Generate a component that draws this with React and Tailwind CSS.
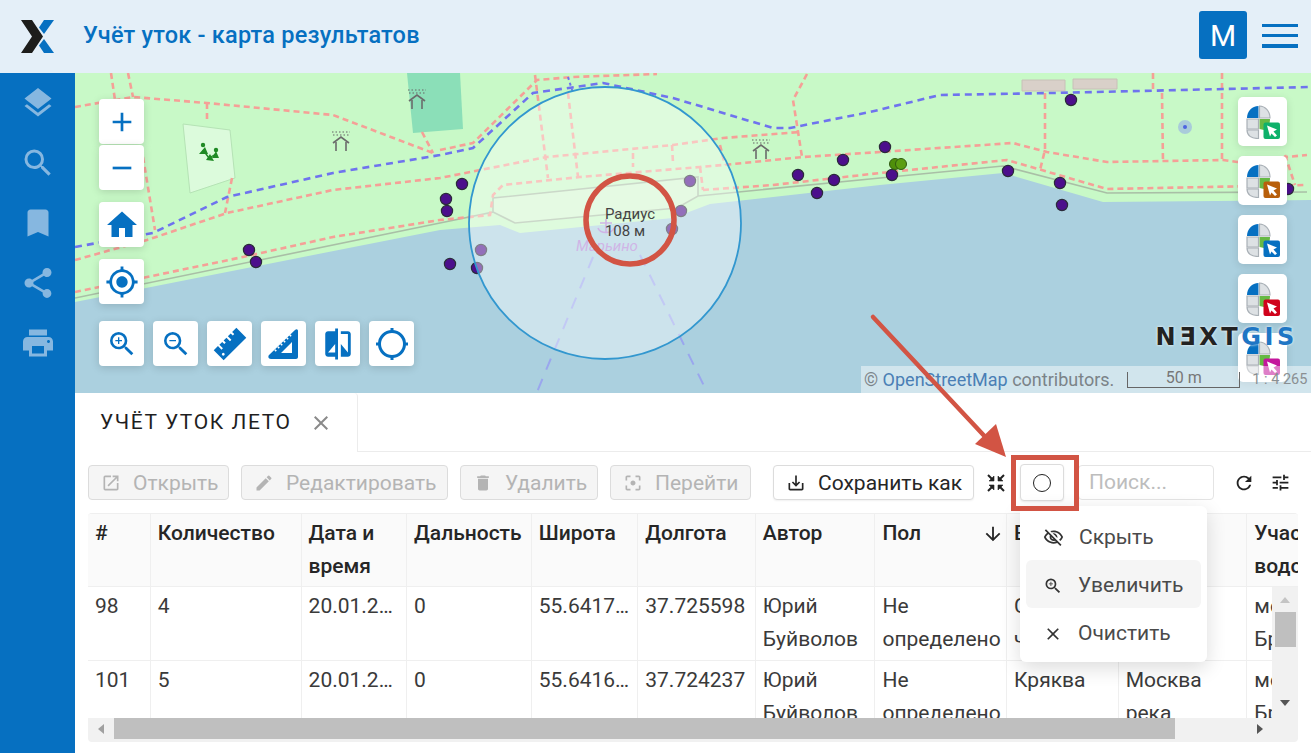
import {
  MdAdd, MdRemove, MdHome, MdGpsFixed, MdZoomIn, MdZoomOut, MdCompare,
  MdLayers, MdSearch, MdBookmark, MdShare, MdPrint, MdClose, MdOpenInNew, MdEdit, MdDelete,
  MdFilterCenterFocus, MdSaveAlt, MdRefresh, MdTune, MdOutlineVisibilityOff,
  MdArrowDownward,
} from "react-icons/md";

const FONT = "font-['Roboto','Liberation_Sans',sans-serif]";

// page coords, the map svg uses viewBox 75 73 1236 320
const RED_ROADS = [
  "M75 107L133 97L207 103L333 115L433 153",
  "M440 150L473 143L537 80L573 77L657 74",
  "M75 260L147 240L227 213L333 190L440 178L480 170L547 157L673 145L723 138L800 132",
  "M75 292L243 257L333 237L440 220L490 215L493 195L503 185L580 177L700 167L723 165L803 157L880 152L1013 143L1047 152L1107 162L1223 160L1237 162L1307 155",
  "M703 190L773 185L880 173L1007 160L1107 189L1307 185",
  "M700 167L703 190",
  "M1045 93L1045 150L1040 170",
  "M1162 93L1163 163",
  "M1222 73L1222 160",
  "M1153 73L1153 90",
  "M535 75L548 178",
  "M568 93L578 177",
  "M633 153L633 167",
  "M672 145L673 163",
  "M807 74L793 100L802 157",
  "M720 145L725 165",
  "M111 73L115 100",
  "M128 73L133 97",
  "M207 103L207 123",
  "M232 178L225 213",
  "M143 157L155 230",
  "M422 132L433 153",
  "M1285 155L1295 185",
];
const BLUE_PATH =
  "M75 247L153 233L227 197L333 173L440 155L473 148L533 93L603 83L673 98L773 128L790 128L870 112L940 95L1053 93L1310 87";
const POINTS = [
  [249, 250], [256, 262], [462, 184], [446, 199], [447, 211], [450, 264], [477, 268], [481, 250],
  [690, 181], [681, 211], [672, 229], [798, 175], [843, 160], [834, 180], [817, 193], [1071, 100],
  [885, 147], [892, 175], [1008, 171], [1060, 183], [1062, 205], [1288, 189],
];

function Shelter({ x, y }) {
  return (
    <g transform={`translate(${x} ${y})`} fill="none" stroke="#6b6b6b">
      <path d="M-8 2L0 -4L8 2" strokeWidth="1.6" />
      <path d="M-5 1V10M5 1V10" strokeWidth="1.6" />
      <path d="M-9 -9H9M-8 -6H8" strokeWidth="1.4" strokeDasharray="1.5 2" opacity="0.7" />
    </g>
  );
}

function MapBase() {
  return (
    <svg className="absolute inset-0 h-full w-full" viewBox="75 73 1236 320">
      <rect x="75" y="73" width="1236" height="320" fill="#c8f9c7" />
      <path d="M407 73L460 73L463 129L413 133Z" fill="#8bdfb8" />
      <path d="M183 124L230 130L235 178L190 193Z" fill="#dcfbdc" stroke="#b5e3b5" />
      <path d="M1022 80H1065V91H1022ZM1073 79H1117V89H1073Z" fill="#d9d0c9" stroke="#c8c0b8" />
      <path
        d="M75 302L440 230L500 225L520 233L673 218L710 204L880 185L1003 173L1103 202L1311 200V393H75Z"
        fill="#abd0df"
      />
      <path d="M493 198L698 177V196L677 208L515 223L493 212Z" fill="#d4f7d0" />
      <path
        d="M75 298L440 223L493 212V198L698 177V196M493 212L515 223L677 208L698 196L880 178L1003 166L1107 193L1307 192"
        fill="none"
        stroke="#a9bfa6"
        strokeWidth="1.6"
      />
      <path
        d="M593 257L537 392M640 255L707 392"
        fill="none"
        stroke="#9aa6ee"
        strokeWidth="2"
        strokeDasharray="12 10"
      />
      {RED_ROADS.map((d) => (
        <path key={d} d={d} fill="none" stroke="#f5a097" strokeWidth="2.6" strokeDasharray="6 4" />
      ))}
      <path d={BLUE_PATH} fill="none" stroke="#6f73ee" strokeWidth="2.6" strokeDasharray="7 5" />
      <path d="M568 77L573 93" stroke="#6f73ee" strokeWidth="2" strokeDasharray="3 3" />

      <g fill="#1f8a24">
        <circle cx="203" cy="145" r="2.2" />
        <circle cx="216" cy="150" r="2.2" />
        <path d="M199 154L205 147L208 154ZM206 160L210 154L214 161ZM212 158L216 151L219 158Z" />
        <path d="M203 150L209 158L216 154" stroke="#1f8a24" strokeWidth="1.4" fill="none" />
      </g>
      <Shelter x={341} y={141} />
      <Shelter x={417} y={99} />
      <Shelter x={761} y={149} />

      <circle cx="1185" cy="127" r="7" fill="#8fa6ea" opacity="0.55" />
      <circle cx="1185" cy="127" r="2" fill="#4d64e0" />

      <path
        d="M606 219V233M600 223H612M598 228C600 234 612 234 614 228"
        fill="none"
        stroke="#b083d6"
        strokeWidth="1.6"
      />
      <text x="607" y="251" textAnchor="middle" fontSize="15" fontStyle="italic" fill="#b083d6" fontFamily="Roboto">
        Марьино
      </text>

      {POINTS.map(([cx, cy]) => (
        <circle key={`${cx}-${cy}`} cx={cx} cy={cy} r="5.6" fill="#4c0f8c" stroke="#2b2b3a" strokeWidth="1.2" />
      ))}
      <circle cx="895" cy="164" r="5.5" fill="#4f8f0a" stroke="#2f5a10" />
      <circle cx="901" cy="164" r="5.5" fill="#5b9e10" stroke="#2f5a10" />

      <circle cx="605" cy="223" r="136" fill="#ffffff" fillOpacity="0.4" stroke="#3297cf" strokeWidth="1.8" />
      <text x="630" y="219" textAnchor="middle" fontSize="15" fill="#444" fontFamily="Roboto">
        Радиус
      </text>
      <text x="625" y="236" textAnchor="middle" fontSize="15" fill="#444" fontFamily="Roboto">
        108 м
      </text>
    </svg>
  );
}

function MapBtn({ children, className = "" }) {
  return (
    <div
      className={`flex h-[45px] w-[45px] items-center justify-center rounded-[4px] bg-white text-[#0670c1] shadow-[0_2px_8px_rgba(0,0,0,0.15)] ${className}`}
    >
      {children}
    </div>
  );
}

function RulerIcon() {
  return (
    <svg width="36" height="36" viewBox="0 0 36 36">
      <g transform="rotate(-45 18 18)">
        <path fill="#0670c1" d="M2 11H8V16H10V11H14V14H16V11H20V16H22V11H26V14H28V11H34V25H2Z" />
        <circle cx="6" cy="20.5" r="1.4" fill="#fff" />
      </g>
    </svg>
  );
}

function SetSquareIcon() {
  return (
    <svg width="34" height="34" viewBox="0 0 34 34">
      <path
        fillRule="evenodd"
        fill="#0670c1"
        d="M2 28L28 3C30 1.5 31 3 31 4V30C31 31 30 32 29 32H4C1 32 1 29 2 28ZM14 26H25V15Z"
      />
      <path d="M8 24L24 8" stroke="#fff" strokeWidth="2" strokeDasharray="1.6 2.6" fill="none" />
    </svg>
  );
}

function TargetIcon() {
  return (
    <svg width="36" height="36" viewBox="0 0 36 36" fill="none" stroke="#0670c1" strokeWidth="3">
      <circle cx="18" cy="18" r="12.5" />
      <path d="M18 2V7M18 29V34M2 18H7M29 18H34" />
    </svg>
  );
}

function CompressIcon() {
  return (
    <svg width="18" height="18" viewBox="0 0 18 18" className="ml-[13px] shrink-0" fill="#222" stroke="#222">
      <path d="M1 1L5 5M17 1L13 5M1 17L5 13M17 17L13 13" strokeWidth="2" fill="none" />
      <path d="M7 2V7H2ZM11 2V7H16ZM7 16V11H2ZM11 16V11H16Z" strokeWidth="0.6" />
    </svg>
  );
}

function PickIcon({ color }) {
  return (
    <svg width="34" height="34" viewBox="0 0 34 34">
      <path d="M1 13C1 6 6 1 12.5 1V13Z" fill="#0670c1" />
      <path d="M13.5 1C19 1 24 6 24 13H13.5Z" fill="#dde1e4" stroke="#a9b0b6" strokeWidth="1.2" />
      <path d="M1 14H12.5V24H1Z" fill="#dde1e4" stroke="#a9b0b6" strokeWidth="1.2" />
      <path d="M13.5 14H24C24 19 22 23 18 25L13.5 24Z" fill="#66b944" />
      <path d="M1 25H12.5V33.5C6 33.5 1 31 1 25Z" fill="#dde1e4" stroke="#a9b0b6" strokeWidth="1.2" />
      <rect x="17.5" y="17.5" width="16.5" height="16.5" rx="2" fill={color} />
      <path d="M21 20.5L31 24.5L27.5 26.5L31 30.5L29 32L25.5 28.5L24 31.5Z" fill="#fff" />
    </svg>
  );
}

function MapControls() {
  return (
    <>
      <div className="absolute left-[24px] top-[26px] flex flex-col">
        <MapBtn><MdAdd size={32} /></MapBtn>
        <MapBtn className="mt-px"><MdRemove size={32} /></MapBtn>
        <MapBtn className="mt-3"><MdHome size={36} /></MapBtn>
        <MapBtn className="mt-3"><MdGpsFixed size={34} /></MapBtn>
        <div className="mt-[17px] flex gap-[9px]">
          <MapBtn><MdZoomIn size={32} /></MapBtn>
          <MapBtn><MdZoomOut size={32} /></MapBtn>
          <MapBtn><RulerIcon /></MapBtn>
          <MapBtn><SetSquareIcon /></MapBtn>
          <MapBtn><MdCompare size={34} /></MapBtn>
          <MapBtn><TargetIcon /></MapBtn>
        </div>
      </div>

      <div className="absolute right-[24px] top-[24px] flex flex-col gap-[10px]">
        {["#0eb16b", "#b85f0b", "#0670c1", "#d0021b", "#c4169c"].map((c) => (
          <div
            key={c}
            className="flex h-[49px] w-[49px] items-center justify-center rounded-[5px] bg-white shadow-[0_2px_8px_rgba(0,0,0,0.12)]"
          >
            <PickIcon color={c} />
          </div>
        ))}
      </div>

      <div className={`absolute bottom-0 right-0 flex h-[27px] w-[450px] items-center bg-white/45 pl-[3px] text-[18px] text-[#7b8388] ${FONT}`}>
        <span className="whitespace-nowrap">
          © <span className="text-[#4a7fb5]">OpenStreetMap</span> contributors.
        </span>
        <span className="ml-[13px] flex h-[16px] w-[113px] shrink-0 items-center justify-center border-x border-b border-[#666] pb-[2px] text-[16px] leading-none text-[#777]">
          50 m
        </span>
        <span className="ml-[12px] whitespace-nowrap text-[14.5px] text-[#8a8f92]">1 : 4 265</span>
      </div>

      <div className="absolute right-[13px] top-[249px] flex text-[24px] font-bold leading-[30px] tracking-[3.6px] [text-shadow:0_0_3px_#fff] font-['DejaVu_Sans',sans-serif]">
        <span className="text-[#222222]">NƎXT</span>
        <span className="text-[#1f76c4]">GIS</span>
      </div>
    </>
  );
}

function ToolBtn({ icon, label, width, disabled = true }) {
  return (
    <button
      className={`flex h-[35px] items-center gap-[12px] rounded-[4px] border pl-[12px] text-[21px] ${width} ${
        disabled
          ? "border-[#dcdcdc] bg-[#f5f5f5] text-[#b4b4b4]"
          : "border-[#dcdcdc] bg-white text-[#262626] shadow-[0_1px_2px_rgba(0,0,0,0.06)]"
      }`}
    >
      {icon}
      <span className="whitespace-nowrap pt-[2px]">{label}</span>
    </button>
  );
}

const COLS = [62, 150, 105, 124, 106, 117, 119, 131, 111, 128, 120];
const HEAD = ["#", "Количество", "Дата и время", "Дальность", "Широта", "Долгота", "Автор", "Пол", "Вид", "Водоём", "Участок водоёма"];
const ROWS = [
  ["98", "4", "20.01.2024", "0", "55.641712", "37.725598", "Юрий Буйволов", "Не определено", "Серая чернеть", "Москва река", "москва Братеево"],
  ["101", "5", "20.01.2024", "0", "55.641654", "37.724237", "Юрий Буйволов", "Не определено", "Кряква", "Москва река", "москва Братеево"],
];

function DataTable() {
  return (
    <div className="relative mx-[13px] mt-[13px] h-[229px] w-[1210px] overflow-hidden rounded-[4px] border-t border-[#efefef] bg-[#f1f1f1]">
      <div className="h-[204px] overflow-hidden bg-white">
        <table className="w-[1280px] table-fixed border-collapse text-[21px] leading-[33px]">
          <colgroup>
            {COLS.map((w, i) => (
              <col key={i} style={{ width: w }} />
            ))}
          </colgroup>
          <thead>
            <tr className="h-[72px] bg-[#fafafa] text-left align-top font-medium text-[#262626]">
              {HEAD.map((h, i) => (
                <th key={h} className="border-b border-r border-[#efefef] px-[7px] pt-[3px] font-medium">
                  {i === 7 ? (
                    <span className="flex items-center justify-between">
                      {h}
                      <MdArrowDownward size={22} className="-mr-[5px]" />
                    </span>
                  ) : (
                    h
                  )}
                </th>
              ))}
            </tr>
          </thead>
          <tbody>
            {ROWS.map((row, r) => (
              <tr key={row[0]} className={`align-top text-[#3a3a3a] ${r === 0 ? "h-[74px]" : "h-[73px]"}`}>
                {row.map((v, i) => (
                  <td
                    key={i}
                    className={`border-b border-r border-[#efefef] px-[7px] pt-[3px] ${
                      i === 2 || i === 4 ? "overflow-hidden text-ellipsis whitespace-nowrap" : ""
                    }`}
                  >
                    {v}
                  </td>
                ))}
              </tr>
            ))}
          </tbody>
        </table>
      </div>

      {/* vertical scrollbar */}
      <div className="absolute right-0 top-[73px] flex h-[131px] w-[26px] flex-col items-center bg-[#f1f1f1]">
        <div className="mt-[10px] h-0 w-0 border-x-[5px] border-b-[6px] border-x-transparent border-b-[#c4c4c4]" />
        <div className="mt-[9px] h-[35px] w-[21px] bg-[#bfbfbf]" />
        <div className="mt-[53px] h-0 w-0 border-x-[5px] border-t-[6px] border-x-transparent border-t-[#555]" />
      </div>
      {/* horizontal scrollbar */}
      <div className="absolute bottom-[3px] left-0 flex h-[21px] w-[1184px] items-center">
        <div className="ml-[10px] h-0 w-0 border-y-[5px] border-r-[6px] border-y-transparent border-r-[#a0a0a0]" />
        <div className="ml-[10px] h-[21px] w-[1061px] bg-[#bfbfbf]" />
        <div className="ml-[82px] h-0 w-0 border-y-[5px] border-l-[6px] border-y-transparent border-l-[#555]" />
      </div>
    </div>
  );
}

function Dropdown() {
  const items = [
    { icon: <MdOutlineVisibilityOff size={21} />, label: "Скрыть" },
    { icon: <MdZoomIn size={20} />, label: "Увеличить", active: true },
    { icon: <MdClose size={20} />, label: "Очистить" },
  ];
  return (
    <div className="absolute left-[945px] top-[113px] w-[187px] rounded-[6px] bg-white p-[6px] shadow-[0_6px_20px_rgba(0,0,0,0.14)]">
      {items.map((it) => (
        <div
          key={it.label}
          className={`flex h-[48px] items-center gap-[15px] rounded-[6px] pl-[17px] pt-[3px] text-[21px] text-[#4a4a4a] ${
            it.active ? "bg-[#f5f5f5]" : ""
          }`}
        >
          <span className="text-[#333]">{it.icon}</span>
          {it.label}
        </div>
      ))}
    </div>
  );
}

function Panel() {
  return (
    <div className={`relative flex-1 bg-white ${FONT}`}>
      <div className="flex h-[59px]">
        <div className="flex w-[283px] items-center rounded-tr-[4px] border-r border-[#ececec] pl-[25px] pt-[1px]">
          <span className="text-[21px] tracking-[1.57px] text-[#1f1f1f]">УЧЁТ УТОК ЛЕТО</span>
          <MdClose size={24} className="ml-[17px] text-[#8a8a8a]" />
        </div>
        <div className="flex-1 border-b border-[#ececec]" />
      </div>

      <div className="mt-[13px] flex h-[35px] items-center pl-[13px]">
        <div className="flex gap-3">
          <ToolBtn width="w-[141px]" label="Открыть" icon={<MdOpenInNew size={20} />} />
          <ToolBtn width="w-[207px]" label="Редактировать" icon={<MdEdit size={20} />} />
          <ToolBtn width="w-[138px]" label="Удалить" icon={<MdDelete size={20} />} />
          <ToolBtn width="w-[141px]" label="Перейти" icon={<MdFilterCenterFocus size={20} />} />
        </div>
        <div className="ml-[22px]">
          <ToolBtn width="w-[201px]" label="Сохранить как" disabled={false} icon={<MdSaveAlt size={20} />} />
        </div>
        <CompressIcon />
        <div className="relative ml-[15px] flex h-[37px] w-[44px] items-center justify-center rounded-[4px] border border-[#dcdcdc] bg-white shadow-[0_1px_2px_rgba(0,0,0,0.08)]">
          <span className="h-[18px] w-[18px] rounded-full border-[1.5px] border-[#222]" />
          <span className="absolute -left-[10px] -top-[10px] z-10 h-[56px] w-[68px] border-[5px] border-[#d25444]" />
        </div>
        <div className="ml-[14px] flex h-[35px] w-[136px] items-center rounded-[4px] border border-[#e4e4e4] pl-[10px] text-[21px] text-[#bdbdbd]">
          Поиск...
        </div>
        <MdRefresh size={22} className="ml-[19px] text-[#222]" />
        <MdTune size={21} className="ml-[15px] text-[#222]" />
      </div>

      <DataTable />
      <Dropdown />
    </div>
  );
}

export default function App() {
  return (
    <div className={`relative flex h-screen flex-col overflow-hidden bg-white ${FONT}`}>
      <header className="flex h-[73px] shrink-0 items-center bg-[#e4eff8]">
        <svg className="ml-[21px] shrink-0" width="33" height="33" viewBox="21 19 33 33">
          <path d="M21 19H32L43 35.5L32 52H21L32 35.5Z" fill="#1d1d1b" />
          <path d="M44 19H54L44 33L39 26.5Z" fill="#0670c1" />
          <path d="M39 44.5L44 38L54 52H44Z" fill="#0670c1" />
        </svg>
        <h1 className="mb-[2px] ml-[29px] text-[23.5px] font-medium tracking-[0.22px] text-[#0670c1]">
          Учёт уток - карта результатов
        </h1>
        <div className="mb-[3px] ml-auto flex h-[48px] w-[48px] items-center justify-center rounded-[3px] bg-[#0670c1] text-[30px] text-white">
          M
        </div>
        <div className="mb-[2px] ml-[15px] mr-[13px] flex h-[24px] w-[36px] flex-col justify-between">
          <span className="h-[3.5px] bg-[#0670c1]" />
          <span className="h-[3.5px] bg-[#0670c1]" />
          <span className="h-[3.5px] bg-[#0670c1]" />
        </div>
      </header>

      <div className="flex min-h-0 flex-1">
        <aside className="flex w-[75px] shrink-0 flex-col items-center bg-[#0670c1] text-[#86b7e0]">
          {[MdLayers, MdSearch, MdBookmark, MdShare, MdPrint].map((Icon, i) => (
            <div key={i} className="flex h-[60px] w-full items-center justify-center">
              <Icon size={36} />
            </div>
          ))}
        </aside>
        <main className="flex min-w-0 flex-1 flex-col">
          <div className="relative h-[320px] shrink-0 overflow-hidden">
            <MapBase />
            <MapControls />
          </div>
          <Panel />
        </main>
      </div>

      {/* annotation arrow over the page */}
      <svg className="pointer-events-none absolute inset-0 h-full w-full" viewBox="0 0 1311 753">
        <path d="M873 317L990 442" stroke="#d25444" strokeWidth="4.5" strokeLinecap="round" fill="none" />
        <path d="M1006 457L975 444L996 424Z" fill="#d25444" />
        <circle cx="630" cy="220" r="44" fill="none" stroke="#d25444" strokeWidth="5.5" />
      </svg>
    </div>
  );
}
